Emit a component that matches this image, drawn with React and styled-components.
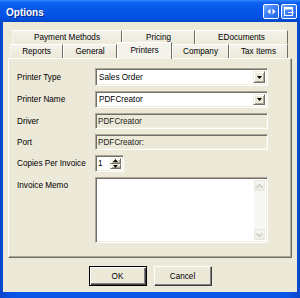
import React from 'react';
import styled, { createGlobalStyle } from 'styled-components';

const Global = createGlobalStyle`
  html, body { margin: 0; padding: 0; width: 300px; height: 298px; overflow: hidden; background: #0B4FD8; }
  #root { width: 300px; height: 298px; }
  * { box-sizing: border-box; }
`;

const Window = styled.div`
  width: 300px;
  height: 298px;
  display: flex;
  flex-direction: column;
  background: linear-gradient(to right, #0A46CC 0%, #0B55E6 4%, #0B55E6 96%, #0A46CC 100%);
  font-family: "Liberation Sans", Arial, sans-serif;
  font-size: 8.2px;
  color: #000;
`;

const TitleBar = styled.div`
  height: 22px;
  flex: none;
  display: flex;
  justify-content: space-between;
  align-items: flex-start;
  padding: 0 3px 0 6px;
  background: linear-gradient(#2F86FF 0%, #0E62F0 12%, #0656E8 45%, #0352E3 80%, #0446C6 100%);
`;

const Title = styled.div`
  color: #fff;
  font-weight: bold;
  font-size: 10px;
  line-height: 12px;
  margin-top: 7px;
  text-shadow: 1px 1px 0 #0A2A8F;
`;

const TitleButtons = styled.div`
  display: flex;
  gap: 2px;
  margin-top: 4px;
`;

const TitleButton = styled.div`
  width: 16px;
  height: 15px;
  border: 1px solid #fff;
  border-radius: 2px;
  background: linear-gradient(135deg, #7AAEFF 0%, #3C7EF5 45%, #2464E6 100%);
  display: flex;
  align-items: center;
  justify-content: center;
`;

const Body = styled.div`
  flex: 1;
  margin: 0 3px 6px 3px;
  background: #ECE9D8;
  display: flex;
  flex-direction: column;
  padding-top: 8px;
`;

const TabRow = styled.div`
  display: flex;
  height: 14px;
  margin-left: ${p => p.$indent}px;
`;

const Tab = styled.div`
  width: ${p => p.$w}px;
  height: ${p => (p.$active ? 17 : 14)}px;
  margin-top: ${p => (p.$active ? -2 : 0)}px;
  position: ${p => (p.$active ? 'relative' : 'static')};
  z-index: ${p => (p.$active ? 1 : 0)};
  display: flex;
  align-items: ${p => (p.$active ? 'flex-start' : 'center')};
  padding-top: ${p => (p.$active ? 3 : 0)}px;
  justify-content: center;
  white-space: nowrap;
  border-top: 1px solid #fff;
  border-left: 1px solid ${p => (p.$first ? '#F6F5EE' : '#fff')};
  border-right: 1px solid #716F64;
  background: ${p => (p.$active ? '#F4F3EC' : 'linear-gradient(#F3F2EB, #ECE9D8)')};
`;

const Panel = styled.div`
  margin: 0 5px;
  height: 200px;
  flex: none;
  border-top: 1px solid #fff;
  border-left: 1px solid #fff;
  border-right: 1px solid #716F64;
  border-bottom: 1px solid #716F64;
  box-shadow: inset -1px -1px 0 #ACA899;
  padding: 9px 0 0 8px;
`;

const Form = styled.div`
  display: grid;
  grid-template-columns: 78px 173px;
  grid-template-rows: 18px 17px 16px 16px 17px 66px;
  row-gap: 5px;
`;

const Label = styled.div`
  align-self: ${p => (p.$top ? 'start' : 'center')};
  padding-top: ${p => (p.$top ? 4 : 0)}px;
  white-space: nowrap;
`;

const Sunken = styled.div`
  border-top: 1px solid #ACA899;
  border-left: 1px solid #ACA899;
  border-right: 1px solid #fff;
  border-bottom: 1px solid #fff;
  box-shadow: inset 1px 1px 0 #716F64, inset -1px -1px 0 #F1EFE2;
  background: ${p => (p.$readonly ? '#ECE9D8' : '#fff')};
  display: flex;
  align-items: center;
  padding: 2px 2px 2px 2px;
`;

const Combo = styled(Sunken)`
  justify-content: space-between;
  padding-left: 3px;
`;

const ValueText = styled.span`
  white-space: nowrap;
  color: ${p => (p.$dim ? '#222' : '#000')};
`;

const Raised = styled.div`
  background: #ECE9D8;
  border-top: 1px solid #F1EFE2;
  border-left: 1px solid #F1EFE2;
  border-right: 1px solid #716F64;
  border-bottom: 1px solid #716F64;
  box-shadow: inset 1px 1px 0 #fff, inset -1px -1px 0 #ACA899;
  display: flex;
  align-items: center;
  justify-content: center;
`;

const DropButton = styled(Raised)`
  width: 12px;
  height: 100%;
`;

const Spin = styled(Sunken)`
  width: 29px;
  justify-content: space-between;
  padding-left: 2px;
`;

const SpinButtons = styled.div`
  display: flex;
  flex-direction: column;
  height: 100%;
`;

const SpinButton = styled(Raised)`
  width: 11px;
  flex: 1;
`;

const Memo = styled(Sunken)`
  align-items: stretch;
  justify-content: flex-end;
  padding: 2px;
`;

const ScrollBar = styled.div`
  width: 11px;
  background: #F7F7F3;
  display: flex;
  flex-direction: column;
  justify-content: space-between;
`;

const ScrollButton = styled.div`
  height: 11px;
  border: 1px solid #E6E6DE;
  border-radius: 2px;
  background: linear-gradient(#F6F6F2, #ECECE6);
  display: flex;
  align-items: center;
  justify-content: center;
`;

const ButtonBar = styled.div`
  display: flex;
  justify-content: center;
  gap: 7px;
  margin-top: 8px;
  padding-left: 0px;
`;

const Button = styled.div`
  width: 58px;
  height: 20px;
  display: flex;
  align-items: center;
  justify-content: center;
  background: #ECE9D8;
  border: 1px solid ${p => (p.$default ? '#000' : 'transparent')};
  border-top-color: ${p => (p.$default ? '#000' : '#fff')};
  border-left-color: ${p => (p.$default ? '#000' : '#fff')};
  border-right-color: ${p => (p.$default ? '#000' : '#404040')};
  border-bottom-color: ${p => (p.$default ? '#000' : '#404040')};
  box-shadow: ${p =>
    p.$default
      ? 'inset 1px 1px 0 #fff, inset -1px -1px 0 #404040, inset -2px -2px 0 #808080'
      : 'inset -1px -1px 0 #808080'};
`;

const DownArrow = () => (
  <svg width="5" height="3" viewBox="0 0 5 3"><path d="M0 0H5L2.5 3Z" fill="#000" /></svg>
);
const UpArrow = () => (
  <svg width="5" height="3" viewBox="0 0 5 3"><path d="M0 3H5L2.5 0Z" fill="#000" /></svg>
);
const Chevron = ({ up }) => (
  <svg width="7" height="4" viewBox="0 0 7 4">
    <path d={up ? 'M0.5 3.5L3.5 0.8L6.5 3.5' : 'M0.5 0.5L3.5 3.2L6.5 0.5'} fill="none" stroke="#C4C4BA" strokeWidth="1.2" />
  </svg>
);

const row1 = [
  { t: 'Payment Methods', w: 110 },
  { t: 'Pricing', w: 73 },
  { t: 'EDocuments', w: 93 },
];
const row2 = [
  { t: 'Reports', w: 53 },
  { t: 'General', w: 54 },
  { t: 'Printers', w: 55, active: true },
  { t: 'Company', w: 57 },
  { t: 'Tax Items', w: 59 },
];

export default function App() {
  return (
    <>
      <Global />
      <Window>
        <TitleBar>
          <Title>Options</Title>
          <TitleButtons>
            <TitleButton>
              <svg width="9" height="7" viewBox="0 0 9 7">
                <path d="M3.5 0.5V6.5L0.5 3.5Z" fill="#fff" />
                <path d="M5.5 0.5V6.5L8.5 3.5Z" fill="#fff" />
              </svg>
            </TitleButton>
            <TitleButton>
              <svg width="10" height="9" viewBox="0 0 10 9">
                <rect x="0.5" y="0.5" width="8" height="8" fill="none" stroke="#fff" />
                <rect x="0.5" y="0.5" width="8" height="2" fill="#fff" />
                <path d="M4 5.5H9.5M7.5 3.8L9.5 5.5L7.5 7.2" fill="none" stroke="#fff" />
              </svg>
            </TitleButton>
          </TitleButtons>
        </TitleBar>
        <Body>
          <TabRow $indent={9}>
            {row1.map((t, i) => (
              <Tab key={t.t} $w={t.w} $first={i === 0}>{t.t}</Tab>
            ))}
          </TabRow>
          <TabRow $indent={7}>
            {row2.map((t, i) => (
              <Tab key={t.t} $w={t.w} $first={i === 0} $active={t.active}>{t.t}</Tab>
            ))}
          </TabRow>
          <Panel>
            <Form>
              <Label>Printer Type</Label>
              <Combo>
                <ValueText>Sales Order</ValueText>
                <DropButton><DownArrow /></DropButton>
              </Combo>
              <Label>Printer Name</Label>
              <Combo>
                <ValueText>PDFCreator</ValueText>
                <DropButton><DownArrow /></DropButton>
              </Combo>
              <Label>Driver</Label>
              <Sunken $readonly>
                <ValueText $dim>PDFCreator</ValueText>
              </Sunken>
              <Label>Port</Label>
              <Sunken $readonly>
                <ValueText $dim>PDFCreator:</ValueText>
              </Sunken>
              <Label>Copies Per Invoice</Label>
              <Spin>
                <ValueText>1</ValueText>
                <SpinButtons>
                  <SpinButton><UpArrow /></SpinButton>
                  <SpinButton><DownArrow /></SpinButton>
                </SpinButtons>
              </Spin>
              <Label $top>Invoice Memo</Label>
              <Memo>
                <ScrollBar>
                  <ScrollButton><Chevron up /></ScrollButton>
                  <ScrollButton><Chevron /></ScrollButton>
                </ScrollBar>
              </Memo>
            </Form>
          </Panel>
          <ButtonBar>
            <Button $default>OK</Button>
            <Button>Cancel</Button>
          </ButtonBar>
        </Body>
      </Window>
    </>
  );
}
